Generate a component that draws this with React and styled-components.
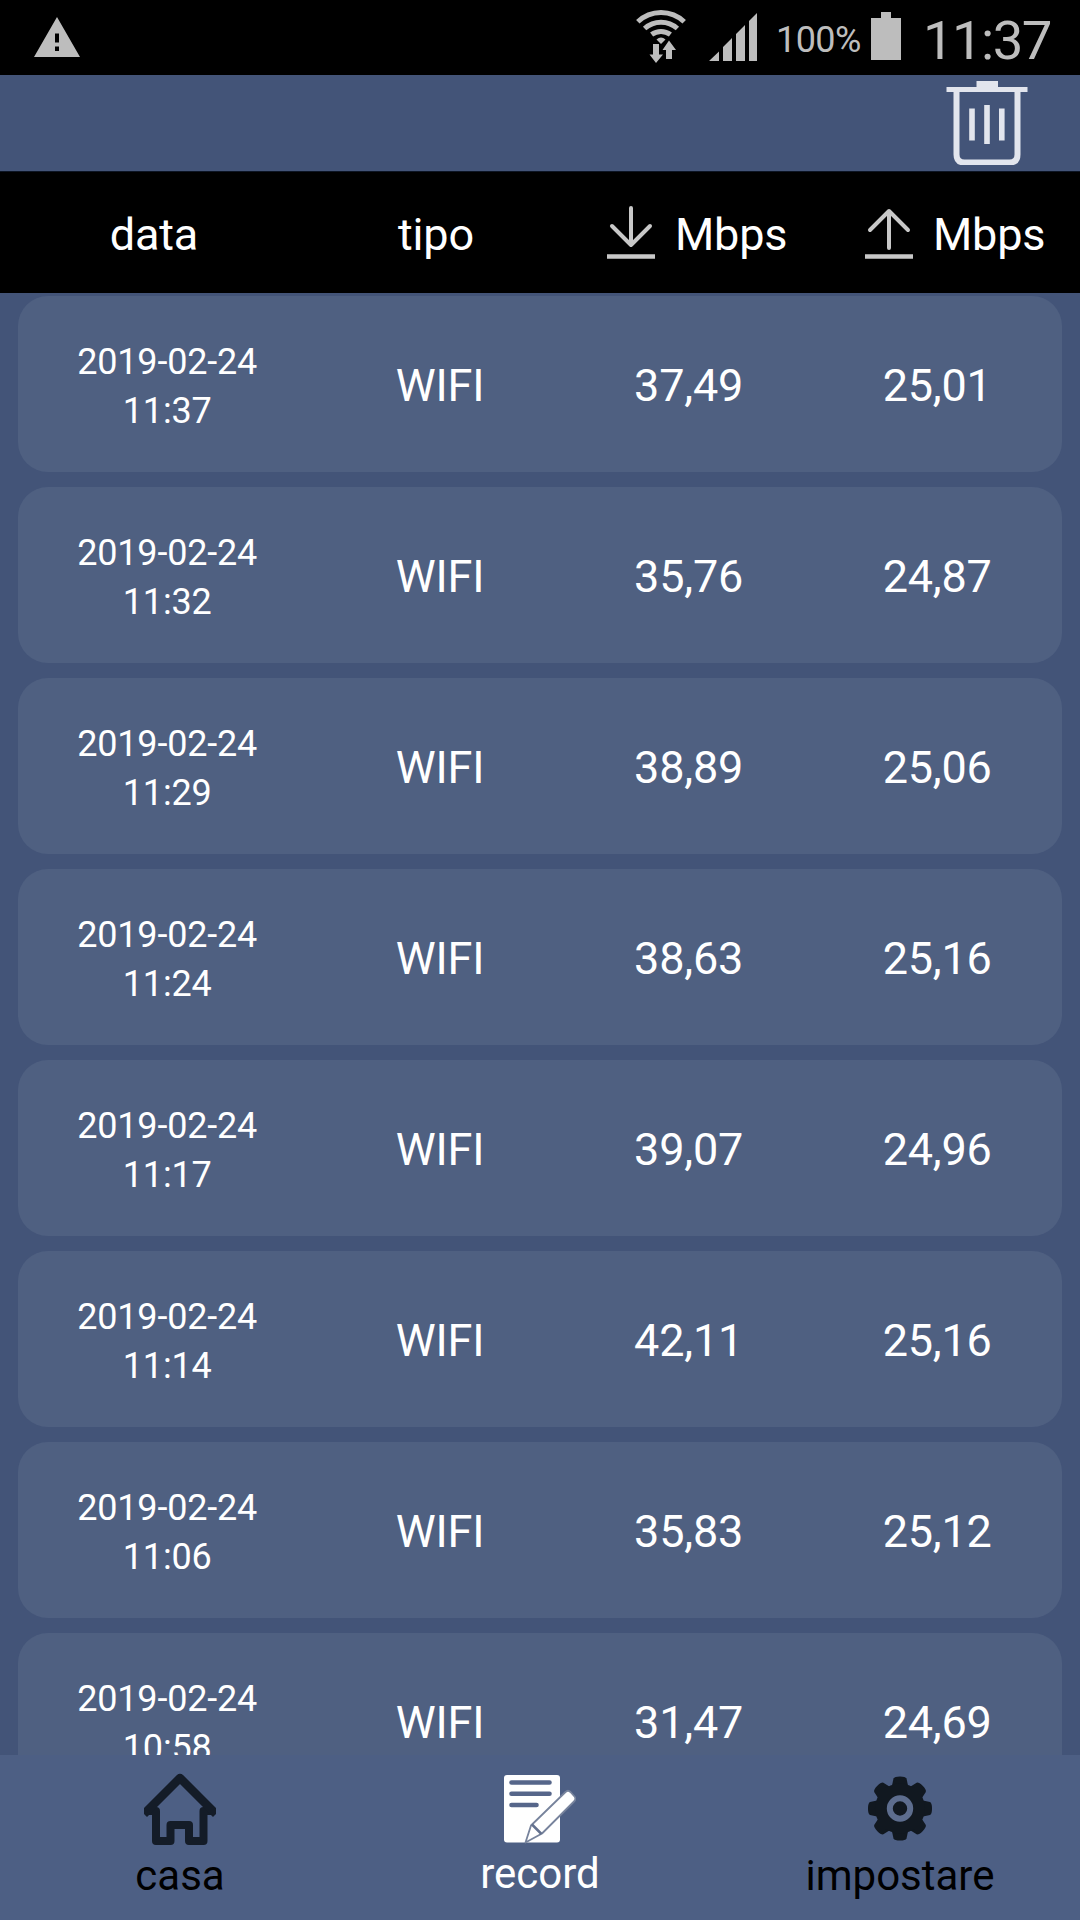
import React from "react";
import styled, { createGlobalStyle } from "styled-components";

const GlobalStyle = createGlobalStyle`
  * {
    box-sizing: border-box;
  }
  body {
    margin: 0;
    background: #435478;
    font-family: Roboto, "Liberation Sans", sans-serif;
  }
`;

const Screen = styled.div`
  width: 1080px;
  height: 1920px;
  display: flex;
  flex-direction: column;
  overflow: hidden;
  background: #435478;
  color: #fff;
`;

const StatusBar = styled.div`
  height: 75px;
  flex: none;
  display: flex;
  align-items: flex-start;
  justify-content: space-between;
  padding: 0 27px 0 34px;
  background: #000;
  color: #bdbdbd;
`;
const StatusGroup = styled.div`
  display: flex;
  align-items: flex-start;
`;
const StatusIcon = styled.svg`
  display: block;
  flex: none;
  fill: currentColor;
  margin-top: ${(p) => p.$top}px;
  margin-right: ${(p) => p.$gap || 0}px;
`;
const Percent = styled.span`
  width: 95px;
  margin-top: 19px;
  font-size: 36px;
  line-height: 42px;
  letter-spacing: -0.6px;
`;
const Clock = styled.span`
  width: 130px;
  margin-top: 8px;
  font-size: 54.5px;
  line-height: 64px;
  letter-spacing: -1.6px;
  white-space: nowrap;
`;

const Toolbar = styled.div`
  height: 97px;
  flex: none;
  display: flex;
  justify-content: flex-end;
  padding: 6px 52px 0 0;
  border-bottom: 1px solid #0d1524;
`;
const DeleteButton = styled.button`
  width: 82px;
  height: 84px;
  padding: 0;
  border: 0;
  background: none;
  color: #e2e5ed;
`;

const TableHead = styled.div`
  height: 121px;
  flex: none;
  display: grid;
  grid-template-columns: 308px 256px 258px 258px;
  align-items: center;
  background: #000;
  font-size: 45px;
  line-height: 53px;
  letter-spacing: -0.2px;
`;
const HeadCell = styled.div`
  padding-top: 4px;
  text-align: center;
`;
const SpeedHead = styled.div`
  display: flex;
  align-items: center;
  gap: 20px;
  padding-left: 43px;
`;
const Unit = styled.span`
  padding-top: 4px;
`;

const List = styled.div`
  flex: 1;
  min-height: 0;
  overflow: hidden;
  display: flex;
  flex-direction: column;
  gap: 15px;
  padding: 3px 18px 0;
`;
const Row = styled.div`
  height: 176px;
  flex: none;
  display: grid;
  grid-template-columns: 1.2fr 1fr 1fr 1fr;
  align-items: center;
  border-radius: 30px;
  background: #4f6081;
  font-size: 45px;
  letter-spacing: -0.2px;
  text-align: center;
`;
const DateCell = styled.div`
  padding-top: 6px;
  font-size: 36px;
  line-height: 49px;
`;
const Cell = styled.div`
  line-height: 53px;
  padding: 2px 1px 0 0;
`;

const NavBar = styled.nav`
  height: 165px;
  flex: none;
  display: grid;
  grid-template-columns: repeat(3, 1fr);
  background: #4d5f84;
`;
const NavItem = styled.div`
  display: flex;
  flex-direction: column;
  align-items: center;
  padding-top: 18px;
  color: ${(p) => (p.$active ? "#fff" : "#000")};
`;
const NavLabel = styled.span`
  margin-top: ${(p) => (p.$active ? 4 : 6)}px;
  font-size: 42px;
  line-height: 49px;
`;

const WarningIcon = () => (
  <StatusIcon $top={17} width="46" height="40" viewBox="0 0 46 40">
    <path
      fillRule="evenodd"
      d="M23 0 46 40H0zM21 16.5v9h4v-9zM21 29.5v4.5h4v-4.5z"
    />
  </StatusIcon>
);

const WifiIcon = () => (
  <StatusIcon $top={9} $gap={23} width="50" height="55" viewBox="0 0 50 55">
    <g fill="none" stroke="currentColor" strokeWidth="5">
      <path d="M1.8 12.8a33.5 33.5 0 0 1 46.4 0" />
      <path d="M8.6 19.5a24.5 24.5 0 0 1 32.8 0" />
      <path d="M15.6 25.6a15.5 15.5 0 0 1 18.8 0" />
    </g>
    <path d="M20.5 30.5q4.500-4 9 0L25 35z" />
    <path d="M17 35h6v10.500h4L20 54l-6.500-8.500H17z" />
    <path d="M33 31.500 40 41h-4v9h-6v-9h-3.500z" />
  </StatusIcon>
);

const SignalIcon = () => (
  <StatusIcon $top={13} $gap={19} width="48" height="48" viewBox="0 0 48 48">
    <path d="M0 48 10 38.500V48zM14 34l9-9v23h-9zM27 21l9-9v36h-9zM40 8l8-8v48h-8z" />
  </StatusIcon>
);

const BatteryIcon = () => (
  <StatusIcon $top={12} $gap={22} width="30" height="48" viewBox="0 0 30 48">
    <path d="M10 0h10v6h10v42H0V6h10z" />
  </StatusIcon>
);

const TrashIcon = () => (
  <svg width="82" height="84" viewBox="0 0 82 84" fill="none" stroke="currentColor">
    <path strokeWidth="6" d="M30.500 3h21.500" />
    <path strokeWidth="5" d="M.5 8.500h81" />
    <path strokeWidth="6" d="M10.500 9v64.500q0 8 8 8h45q8 0 8-8V9" />
    <path strokeWidth="5.600" d="M26 27.500V59.500M41 24v39M55.800 27.500V59.500" />
  </svg>
);

const ArrowIcon = ({ up }) => (
  <svg
    width="48"
    height="56"
    viewBox="0 0 48 56"
    fill="none"
    stroke="#c8c8c8"
    strokeWidth="4"
    strokeLinecap="round"
    strokeLinejoin="round"
  >
    {up ? (
      <path d="M24 43V6M5 25 24 6l19 19" />
    ) : (
      <path d="M24 3v37M5 21l19 19 19-19" />
    )}
    <path strokeLinecap="butt" strokeWidth="4.500" d="M0 51.500h48" />
  </svg>
);

const HomeIcon = () => (
  <svg width="72" height="72" viewBox="0 0 72 72" fill="none" stroke="#141c28">
    <path
      strokeWidth="8"
      strokeLinejoin="round"
      d="M2 38h10v30h14.500V52H45v16h14.500V38H70"
    />
    <path strokeWidth="8.500" strokeLinejoin="round" d="M0 41 36 5l36 36" />
  </svg>
);

const RecordIcon = () => (
  <svg width="72" height="72" viewBox="0 0 72 72">
    <rect x="0" y="2" width="56" height="67.500" rx="3" fill="#fff" />
    <path
      d="M7.500 9.500h38M7.500 20.800h38M7.500 32h25"
      stroke="#56668a"
      strokeWidth="4.600"
      strokeLinecap="round"
    />
    <path
      d="M21.500 69.500 27 52.500 61.500 19q2.500-2.500 5 0l4 4.500q2 2.500-.5 5L38 60.500z"
      fill="#fff"
      stroke="#77839c"
      strokeWidth="1.800"
      strokeLinejoin="round"
    />
    <path d="M28 51.500 37.500 61" stroke="#63718e" strokeWidth="2.500" />
  </svg>
);

const GearIcon = () => (
  <svg width="72" height="72" viewBox="-36 -35.500 72 72" fill="#111820">
    {[0, 45, 90, 135].map((a) => (
      <path
        key={a}
        transform={`rotate(${a})`}
        d="M-8-23-6.500-30q1-2 6.500-2t6.500 2L8-23V23L6.500 30q-1 2-6.500 2t-6.500-2L-8 23z"
      />
    ))}
    <circle r="25" />
    <circle r="10.200" fill="none" stroke="#5d6d8e" strokeWidth="6" />
  </svg>
);

const records = [
  { time: "11:37", down: "37,49", up: "25,01" },
  { time: "11:32", down: "35,76", up: "24,87" },
  { time: "11:29", down: "38,89", up: "25,06" },
  { time: "11:24", down: "38,63", up: "25,16" },
  { time: "11:17", down: "39,07", up: "24,96" },
  { time: "11:14", down: "42,11", up: "25,16" },
  { time: "11:06", down: "35,83", up: "25,12" },
  { time: "10:58", down: "31,47", up: "24,69" },
];

const App = () => {
  return (
    <Screen>
      <GlobalStyle />
      <StatusBar>
        <WarningIcon />
        <StatusGroup>
          <WifiIcon />
          <SignalIcon />
          <Percent>100%</Percent>
          <BatteryIcon />
          <Clock>11:37</Clock>
        </StatusGroup>
      </StatusBar>
      <Toolbar>
        <DeleteButton>
          <TrashIcon />
        </DeleteButton>
      </Toolbar>
      <TableHead>
        <HeadCell>data</HeadCell>
        <HeadCell>tipo</HeadCell>
        <SpeedHead>
          <ArrowIcon />
          <Unit>Mbps</Unit>
        </SpeedHead>
        <SpeedHead>
          <ArrowIcon up />
          <Unit>Mbps</Unit>
        </SpeedHead>
      </TableHead>
      <List>
        {records.map((r) => (
          <Row key={r.time}>
            <DateCell>
              2019-02-24
              <br />
              {r.time}
            </DateCell>
            <Cell>WIFI</Cell>
            <Cell>{r.down}</Cell>
            <Cell>{r.up}</Cell>
          </Row>
        ))}
      </List>
      <NavBar>
        <NavItem>
          <HomeIcon />
          <NavLabel>casa</NavLabel>
        </NavItem>
        <NavItem $active>
          <RecordIcon />
          <NavLabel $active>record</NavLabel>
        </NavItem>
        <NavItem>
          <GearIcon />
          <NavLabel>impostare</NavLabel>
        </NavItem>
      </NavBar>
    </Screen>
  );
};

export default App;
